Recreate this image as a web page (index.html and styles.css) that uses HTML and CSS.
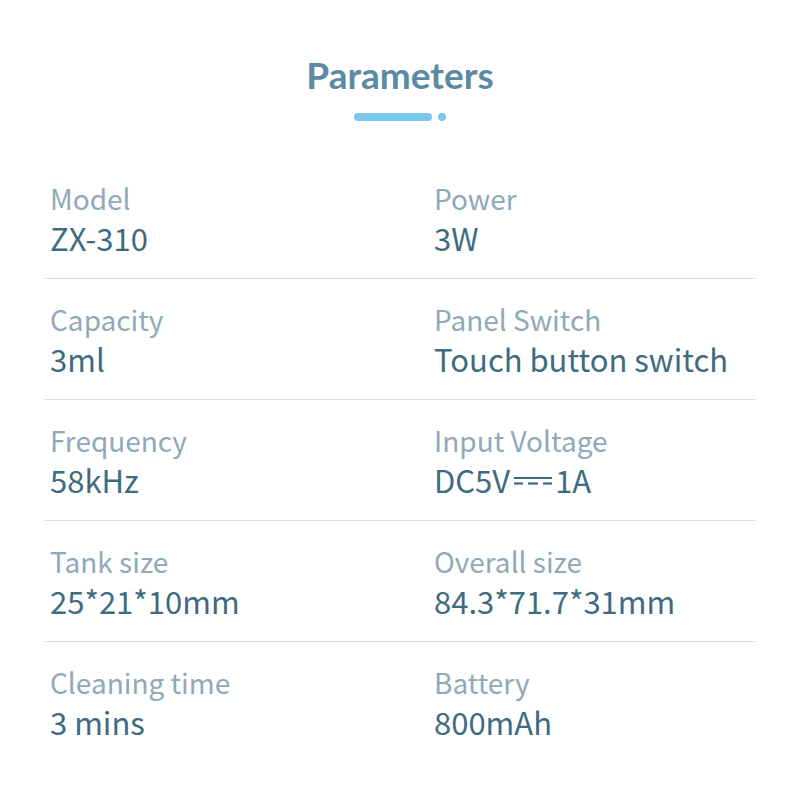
FILE: index.html
```html
<!DOCTYPE html>
<html>
<head>
<meta charset="utf-8">
<link rel="stylesheet" href="styles.css">
</head>
<body>
<div class="page">
  <header class="header">
    <h1 class="title">Parameters</h1>
    <div class="deco"><span class="deco-bar"></span><span class="deco-dot"></span></div>
  </header>
  <div class="specs">
    <div class="row">
      <div class="cell"><div class="label">Model</div><div class="value">ZX-310</div></div>
      <div class="cell"><div class="label">Power</div><div class="value">3W</div></div>
    </div>
    <div class="row">
      <div class="cell"><div class="label">Capacity</div><div class="value">3ml</div></div>
      <div class="cell"><div class="label">Panel Switch</div><div class="value">Touch button switch</div></div>
    </div>
    <div class="row">
      <div class="cell"><div class="label">Frequency</div><div class="value">58kHz</div></div>
      <div class="cell"><div class="label">Input Voltage</div><div class="value">DC5V<svg class="dc" width="40" height="12" viewBox="0 0 40 12"><line x1="1" y1="4" x2="39" y2="4" stroke="#3e6b80" stroke-width="2.2"/><line x1="1" y1="9.5" x2="10" y2="9.5" stroke="#3e6b80" stroke-width="2.2"/><line x1="15" y1="9.5" x2="25" y2="9.5" stroke="#3e6b80" stroke-width="2.2"/><line x1="30" y1="9.5" x2="39" y2="9.5" stroke="#3e6b80" stroke-width="2.2"/></svg>1A</div></div>
    </div>
    <div class="row">
      <div class="cell"><div class="label">Tank size</div><div class="value">25*21*10mm</div></div>
      <div class="cell"><div class="label">Overall size</div><div class="value">84.3*71.7*31mm</div></div>
    </div>
    <div class="row last">
      <div class="cell"><div class="label">Cleaning time</div><div class="value">3 mins</div></div>
      <div class="cell"><div class="label">Battery</div><div class="value">800mAh</div></div>
    </div>
  </div>
</div>
</body>
</html>
```
FILE: styles.css
```css
html, body {
  margin: 0;
  padding: 0;
  background: #ffffff;
}
.page {
  width: 800px;
  height: 800px;
  font-family: "Noto Sans CJK SC", "Open Sans", sans-serif;
}
.header {
  height: 158px;
  box-sizing: border-box;
  padding-top: 53px;
  display: flex;
  flex-direction: column;
  align-items: center;
}
.title {
  margin: 0;
  font-family: Lato, sans-serif;
  font-size: 37px;
  line-height: 44px;
  font-weight: 700;
  color: #5b8ba3;
}
.deco {
  margin-top: 16px;
  display: flex;
  align-items: center;
  gap: 6px;
}
.deco-bar {
  width: 78px;
  height: 8px;
  border-radius: 4px;
  background: #7cc7ee;
}
.deco-dot {
  width: 8px;
  height: 8px;
  border-radius: 50%;
  background: #7cc7ee;
}
.specs {
  padding: 0 44px;
}
.row {
  display: grid;
  grid-template-columns: 384px 1fr;
  border-bottom: 1px solid #dcdfe1;
  padding: 22px 0 18px;
}
.row.last {
  border-bottom: none;
}
.cell {
  padding-left: 6px;
}
.label {
  font-size: 28px;
  line-height: 36px;
  color: #8eaab8;
}
.value {
  font-size: 31px;
  line-height: 44px;
  color: #3e6b80;
  display: flex;
  align-items: center;
}
.dc {
  margin: 0 2px 0 3px;
}
```
